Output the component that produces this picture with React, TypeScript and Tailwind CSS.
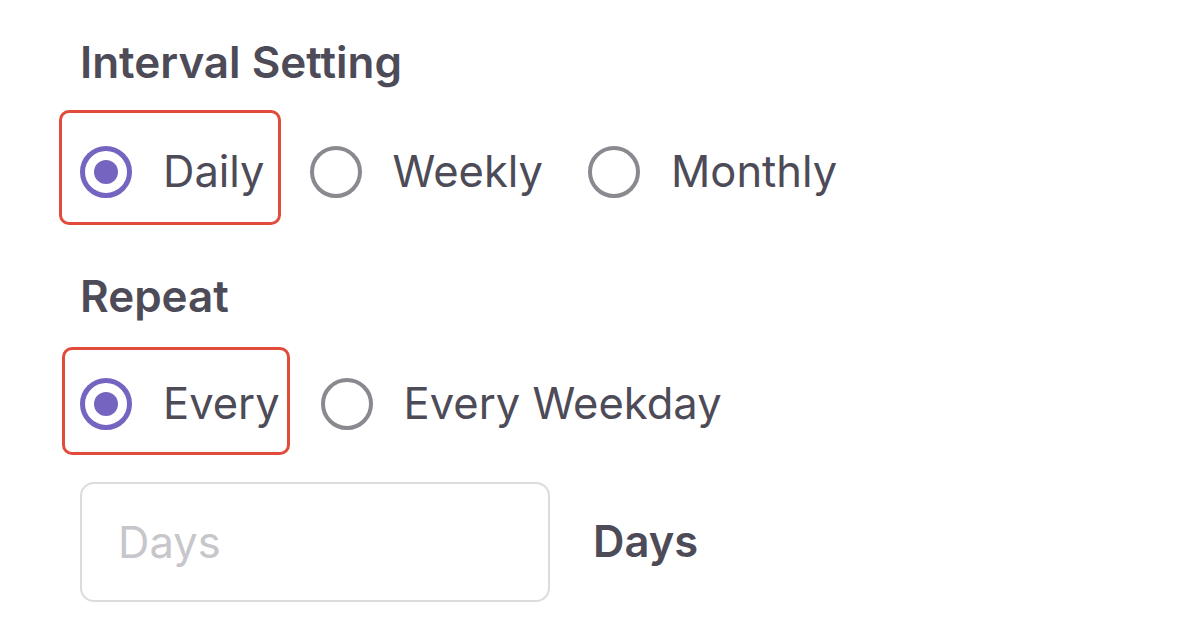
import React from "react";

type Option = { label: string; checked?: boolean; highlight?: string };

function Radio({ checked }: { checked?: boolean }) {
  return checked ? (
    <span className="flex h-[52px] w-[52px] shrink-0 items-center justify-center rounded-full border-[5px] border-[#7565c0]">
      <span className="h-[24px] w-[24px] rounded-full bg-[#7565c0]" />
    </span>
  ) : (
    <span className="h-[52px] w-[52px] shrink-0 rounded-full border-[4.5px] border-[#8a898f]" />
  );
}

function RadioItem({ label, checked, highlight }: Option) {
  return (
    <label className="relative flex items-center gap-[31px]">
      {highlight && <span className={`pointer-events-none absolute rounded-[10px] border-[3px] border-[#e14b3b] ${highlight}`} />}
      <Radio checked={checked} />
      <span className="text-[43.5px] leading-none text-[#4d4b57]">{label}</span>
    </label>
  );
}

export default function App() {
  return (
    <div className="min-h-screen bg-white pl-[80px] pt-[38px] font-['Inter',sans-serif]">
      <h2 className="text-[44px] font-semibold leading-[48px] text-[#4d4b57]">Interval Setting</h2>
      <div className="mt-[60px] flex items-center gap-[45px]">
        <RadioItem label="Daily" checked highlight="-left-[21px] -right-[16px] -top-[36px] -bottom-[27px]" />
        <RadioItem label="Weekly" />
        <RadioItem label="Monthly" />
      </div>

      <h2 className="mt-[74px] text-[44px] font-semibold leading-[48px] text-[#4d4b57]">Repeat</h2>
      <div className="mt-[58px] flex items-center gap-[41px]">
        <RadioItem label="Every" checked highlight="-left-[18px] -right-[10px] -top-[31px] -bottom-[25px]" />
        <RadioItem label="Every Weekday" />
      </div>

      <div className="mt-[52px] flex items-center gap-[43px]">
        <input
          placeholder="Days"
          className="h-[120px] w-[470px] rounded-[14px] border-2 border-[#dcdcdf] px-[36px] text-[43.5px] text-[#4d4b57] outline-none placeholder:text-[#c6c6cb]"
        />
        <span className="text-[43.5px] font-semibold text-[#4d4b57]">Days</span>
      </div>
    </div>
  );
}
